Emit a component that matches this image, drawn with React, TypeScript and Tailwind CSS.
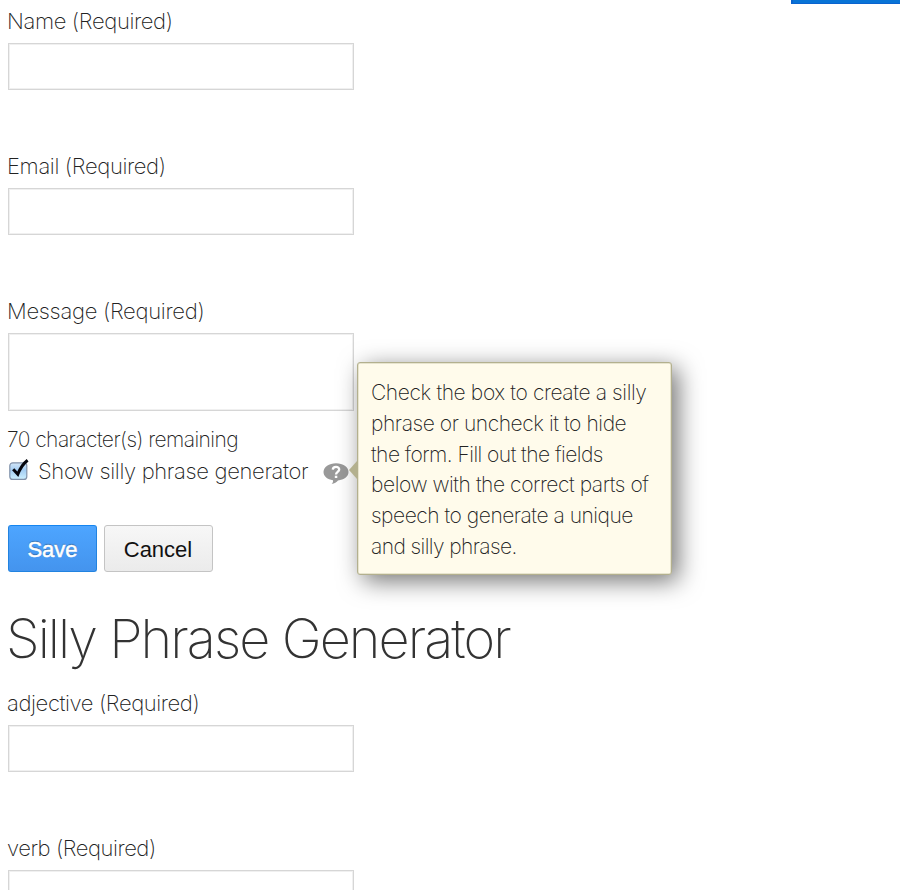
function Field({ label, tracking, tall }: { label: string; tracking: string; tall?: boolean }) {
  return (
    <div className={tall ? "h-[117px]" : "h-[145px]"}>
      <label className={`-ml-px block h-[38px] pt-[0.5px] leading-[31px] whitespace-nowrap ${tracking}`}>{label}</label>
      {tall ? (
        <div className="h-[78px] w-[346px] border border-[#d6d6d6] bg-white shadow-[inset_0_0_0_1px_#f0f0f0]" />
      ) : (
        <div className="h-[47px] w-[346px] border border-[#d6d6d6] bg-white shadow-[inset_0_0_0_1px_#f0f0f0]" />
      )}
    </div>
  );
}

function Checkbox() {
  return (
    <svg className="mt-[3px] h-[24px] w-[22px] shrink-0" viewBox="0 0 22 24">
      <defs>
        <linearGradient id="box" x1="0" y1="0" x2="0" y2="1">
          <stop offset="0" stopColor="#d3e6f8" />
          <stop offset="0.45" stopColor="#a3cdf3" />
          <stop offset="1" stopColor="#cdf0ff" />
        </linearGradient>
      </defs>
      <rect x="1.8" y="4.8" width="17" height="16.6" rx="3" fill="url(#box)" stroke="#8191a9" strokeWidth="1.2" />
      <path d="M5.2 11.2 L9.8 16.2 C12 10.5 15 5.8 19.6 2.2" fill="none" stroke="#06060d" strokeWidth="3" />
    </svg>
  );
}

function HelpIcon() {
  return (
    <svg className="mt-[8px] ml-[15px] h-[22px] w-[26px] shrink-0" viewBox="0 0 26 22">
      <path d="M13 0.3 C20 0.3 25.5 4 25.5 9 C25.5 13.5 21 16.8 15 17.4 C13.5 19.2 11.5 20.4 8.6 21 C9.8 19.8 10.2 18.5 10 17.2 C4.5 16.5 0.5 13.2 0.5 9 C0.5 4 6 0.3 13 0.3 Z" fill="#999" />
      <path d="M9.8 6.6 C9.9 2.9 16.4 3 16.2 6.6 C16.1 8.8 13 8.9 13 11.4" fill="none" stroke="#fff" strokeWidth="2.3" />
      <rect x="11.8" y="12.7" width="2.5" height="2.3" fill="#fff" />
    </svg>
  );
}

const tip = [
  { text: "Check the box to create a silly", tracking: "tracking-[-0.38px]" },
  { text: "phrase or uncheck it to hide", tracking: "tracking-[-0.43px]" },
  { text: "the form. Fill out the fields", tracking: "tracking-[-0.54px]" },
  { text: "below with the correct parts of", tracking: "tracking-[-0.44px]" },
  { text: "speech to generate a unique", tracking: "tracking-[-0.48px]" },
  { text: "and silly phrase.", tracking: "tracking-[-0.6px]" },
];

function Tooltip() {
  return (
    <div className="absolute top-[362px] left-[357px] h-[213px] w-[315px] rounded-[3px] border-[1.5px] border-[#b3b08e] bg-[#fffbeb] pt-[15px] pl-[13px] text-[21px] leading-[30.8px] shadow-[6px_6px_25px_rgba(0,0,0,0.55),inset_0_0_0_0.5px_rgba(179,176,142,0.6)]">
      <svg className="absolute top-[98px] left-[-9px] h-[18px] w-[8px]" viewBox="0 0 8 18">
        <path d="M8 0 V18 L0 9 Z" fill="#b3b08e" />
      </svg>
      {tip.map((line) => (
        <p key={line.text} className={`whitespace-nowrap ${line.tracking}`}>{line.text}</p>
      ))}
    </div>
  );
}

export default function App() {
  return (
    <div className="relative h-[890px] w-[900px] overflow-hidden bg-white font-['Inter',sans-serif] text-[22px] font-extralight text-[#222]">
      <div className="ml-auto h-1 w-[109px] border-b border-l-2 border-[#0a63cf] bg-[#0873d6]" />
      <div className="pt-px pl-2">
        <Field label="Name (Required)" tracking="tracking-[-0.36px]" />
        <Field label="Email (Required)" tracking="tracking-[-0.36px]" />
        <Field label="Message (Required)" tracking="tracking-[-0.3px]" tall />
        <p className="mt-[12px] -ml-px h-[31px] text-[21px] leading-[31px] tracking-[-0.56px] whitespace-nowrap">70 character(s) remaining</p>
        <div className="flex h-[34px] items-start">
          <Checkbox />
          <span className="ml-[8px] leading-[33px] tracking-[-0.34px] whitespace-nowrap">Show silly phrase generator</span>
          <HelpIcon />
        </div>
        <div className="mt-[36px] flex gap-[7px] font-['Liberation_Sans',sans-serif] font-normal">
          <button className="h-[47px] w-[89px] rounded-[3px] border border-[#2283e0] border-t-[#1585f0] bg-linear-to-b from-[#4da5ff] to-[#4494ee] pt-px text-white [-webkit-text-stroke:0.5px_white] [text-shadow:0_-1px_1px_rgba(0,0,0,0.35)]">Save</button>
          <button className="h-[47px] w-[109px] rounded-[3px] border-[1.5px] border-[#c4c4c4] bg-linear-to-b from-[#f7f7f7] to-[#ebebeb] pt-px pr-[7px] pl-[6px] text-[#111]">Cancel</button>
        </div>
        <h1 className="mt-[32px] -ml-[2px] h-[83px] text-[54px] leading-[70px] tracking-[-1.95px] whitespace-nowrap text-[#333]">Silly Phrase Generator</h1>
        <Field label="adjective (Required)" tracking="tracking-[-0.4px]" />
        <Field label="verb (Required)" tracking="tracking-[-0.46px]" />
      </div>
      <Tooltip />
    </div>
  );
}
